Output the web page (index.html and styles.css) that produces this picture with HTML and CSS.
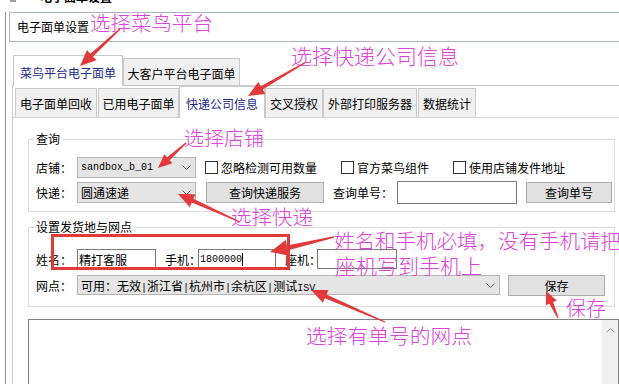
FILE: index.html
```html
<!DOCTYPE html>
<html lang="zh-CN">
<head>
<meta charset="utf-8">
<title>电子面单设置</title>
<link rel="stylesheet" href="styles.css">
</head>
<body>
<div class="titlebar">
  <span class="app-icon"></span>
  <span class="title-text">电子面单设置</span>
</div>
<div class="window">
  <div class="setting-box">电子面单设置</div>
  <div class="outer-tabs">
    <div class="tab sel otab1">菜鸟平台电子面单</div>
    <div class="tab otab2">大客户平台电子面单</div>
  </div>
  <div class="outer-panel">
    <div class="inner-tabs">
      <div class="tab itab it1">电子面单回收</div>
      <div class="tab itab it2">已用电子面单</div>
      <div class="tab sel it3">快递公司信息</div>
      <div class="tab itab it4">交叉授权</div>
      <div class="tab itab it5">外部打印服务器</div>
      <div class="tab itab it6">数据统计</div>
    </div>
    <div class="inner-panel">
      <fieldset class="group g-query">
        <legend>查询</legend>
        <div class="row row-shop">
          <span class="lbl">店铺：</span>
          <div class="combo c-small"><span class="mono">sandbox_b_01</span><svg class="chev" width="9" height="5" viewBox="0 0 9 5"><path d="M0.5 0.5 L4.5 4.5 L8.5 0.5" fill="none" stroke="#555" stroke-width="1"/></svg></div>
          <label class="chk chk1"><span class="box"></span>忽略检测可用数量</label>
          <label class="chk chk2"><span class="box"></span>官方菜鸟组件</label>
          <label class="chk chk3"><span class="box"></span>使用店铺发件地址</label>
        </div>
        <div class="row row-express">
          <span class="lbl">快递：</span>
          <div class="combo c-small"><span>圆通速递</span><svg class="chev" width="9" height="5" viewBox="0 0 9 5"><path d="M0.5 0.5 L4.5 4.5 L8.5 0.5" fill="none" stroke="#555" stroke-width="1"/></svg></div>
          <button class="btn btn-service">查询快递服务</button>
          <span class="lbl lbl-no">查询单号：</span>
          <div class="input in-no"></div>
          <button class="btn btn-query">查询单号</button>
        </div>
      </fieldset>
      <fieldset class="group g-sender">
        <legend>设置发货地与网点</legend>
        <div class="row row-contact">
          <span class="lbl">姓名：</span>
          <div class="input in-name">精打客服</div>
          <span class="lbl lbl-phone">手机：</span>
          <div class="input in-phone"><span class="mono">1800000</span><span class="caret"></span></div>
          <span class="lbl lbl-tel">座机：</span>
          <div class="input in-tel"></div>
        </div>
        <div class="row row-branch">
          <span class="lbl">网点：</span>
          <div class="combo c-wide"><span>可用：无效<span class="mono">|</span>浙江省<span class="mono">|</span>杭州市<span class="mono">|</span>余杭区<span class="mono">|</span>测试<span class="mono">ISV</span></span><svg class="chev" width="9" height="5" viewBox="0 0 9 5"><path d="M0.5 0.5 L4.5 4.5 L8.5 0.5" fill="none" stroke="#555" stroke-width="1"/></svg></div>
          <button class="btn btn-save">保存</button>
        </div>
      </fieldset>
      <div class="log">
        <div class="scroll"><svg width="9" height="5" viewBox="0 0 9 5"><path d="M0.5 4.5 L4.5 0.5 L8.5 4.5" fill="none" stroke="#a0a0a0" stroke-width="1"/></svg></div>
      </div>
    </div>
  </div>
</div>
<svg class="annot" width="619" height="384" viewBox="0 0 619 384">
  <g fill="#e23a3a">
    <polygon points="119.5,28.5 90.4,53.7 87,50 80,66 96.5,60.2 93.1,56.6 120.5,29.5"/>
    <polygon points="305.6,61.4 260.8,86.2 258.3,81.9 248,96 265.3,93.9 262.8,89.6 306.4,62.6"/>
    <polygon points="185.5,142.5 167.1,157.2 164.4,154.2 158,168 172.4,163.2 169.7,160.2 186.5,143.5"/>
    <polygon points="240.3,221.4 193.4,198.8 195.5,194.2 178,194 189.7,207 191.8,202.4 239.7,222.6"/>
    <polygon points="333.8,236.2 286.9,245.5 285.7,240.1 270,252 289.3,255.7 288.1,250.3 334.2,237.8"/>
    <polygon points="385.3,321.4 326.5,294.6 328.5,290 311,290 322.9,302.8 324.9,298.2 384.7,322.6"/>
    <polygon points="558.6,317.7 553.1,302.1 556.8,300.5 546,291 545.8,305.3 549.5,303.7 557.4,318.3"/>
  </g>
  <rect x="52.5" y="235.5" width="236" height="33" fill="none" stroke="#e23a3a" stroke-width="3"/>
  <g class="note">
    <text x="90" y="30.5" font-size="20.5">选择菜鸟平台</text>
    <text x="291" y="63.5" font-size="21">选择快递公司信息</text>
    <text x="184" y="145.5" font-size="20">选择店铺</text>
    <text x="231" y="224.5" font-size="20.5">选择快递</text>
    <text x="334" y="248.5" font-size="20.5">姓名和手机必填，没有手机请把</text>
    <text x="335" y="273.5" font-size="21">座机写到手机上</text>
    <text x="566" y="315.5" font-size="20">保存</text>
    <text x="306" y="343.5" font-size="20.75">选择有单号的网点</text>
  </g>
</svg>
</body>
</html>
```
FILE: styles.css
```css
* { box-sizing: border-box; }
html, body { margin: 0; padding: 0; }
body {
  width: 619px;
  height: 384px;
  overflow: hidden;
  position: relative;
  background: #ffffff;
  font-family: "Noto Sans CJK SC", "Noto Sans", sans-serif;
  font-size: 12px;
  color: #000;
}

/* title bar (mostly cut off) */
.titlebar {
  height: 5px;
  overflow: hidden;
  display: flex;
  align-items: flex-end;
  padding-left: 10px;
}
.app-icon {
  align-self: flex-start;
  width: 6px;
  height: 2px;
  background: #9aa3ad;
  margin-right: 24px;
}
.title-text {
  font-size: 12px;
  line-height: 16px;
  font-weight: 700;
}

.window {
  margin-left: 5px;
  border-left: 1px solid #8e8e8e;
  height: 379px;
}

.setting-box {
  margin: 7px 0 0 3px;
  width: 620px;
  height: 30px;
  border: 1px solid #a9b2c3;
  border-right: none;
  line-height: 28px;
  padding-left: 7px;
}

/* tabs */
.tab {
  border: 1px solid #c9c9c9;
  border-bottom: none;
  background: #f0f0f0;
  text-align: center;
  line-height: 16px;
  white-space: nowrap;
}
.tab.sel {
  background: #ffffff;
  color: #1c2b8e;
  position: relative;
  margin-bottom: -1px;
}
.outer-tabs {
  margin: 13px 0 0 7px;
  height: 30px;
  display: flex;
  align-items: flex-end;
}
.otab1 { width: 110px; height: 31px; padding-top: 9px; }
.otab2 { width: 117px; height: 27px; padding-top: 7px; }

.outer-panel {
  margin-left: 6px;
  border-left: 1px solid #c9c9c9;
  border-top: 1px solid #c9c9c9;
}
.inner-tabs {
  height: 31px;
  padding-left: 2px;
  display: flex;
  align-items: flex-end;
}
.itab { height: 29px; padding-top: 7px; }
.it1 { width: 82px; }
.it2 { width: 81px; margin-left: 1px; }
.it3 { width: 86px; height: 32px; padding-top: 9px; }
.it4 { width: 58px; }
.it5 { width: 94px; }
.it6 { width: 58px; margin-left: 1px; }

.inner-panel {
  border-top: 1px solid #d3d3d3;
  padding-left: 15px;
  height: 270px;
}

/* group boxes */
.group {
  margin: 0;
  width: 587px;
  min-width: 0;
  border: 1px solid #dcdcdc;
}
.group legend {
  padding: 0 2px;
  margin-left: -2px;
  line-height: 16px;
  height: 16px;
}
.g-query { margin-top: 13px; padding: 10px 0 7px 7px; }
.g-sender { margin-top: 7px; padding: 14px 0 10px 7px; }

.row { display: flex; align-items: center; }
.row-shop { height: 21px; }
.row-express { height: 24px; margin-top: 2px; }
.row-contact { height: 20px; }
.row-branch { height: 22px; margin-top: 5px; }

.lbl { width: 41px; flex: none; white-space: nowrap; }
.lbl-no { width: 64px; margin-left: 9px; }
.lbl-phone { width: 33px; margin-left: 9px; }
.lbl-tel { width: 32px; margin-left: 9px; }

.mono {
  font-family: "Liberation Mono", "DejaVu Sans Mono", monospace;
  font-size: 10px;
}

.combo {
  flex: none;
  display: flex;
  align-items: center;
  justify-content: space-between;
  height: 21px;
  background: #e5e5e5;
  border: 1px solid #b4b4b4;
  padding: 0 4px 0 3px;
  white-space: nowrap;
}
.c-small { width: 119px; }
.c-wide { width: 423px; height: 20px; }

.chk {
  flex: none;
  display: flex;
  align-items: center;
  white-space: nowrap;
}
.chk .box {
  width: 13px;
  height: 13px;
  border: 1px solid #333;
  background: #fff;
  margin-right: 3px;
}
.chk1 { width: 136px; margin-left: 9px; }
.chk2 { width: 112px; }

.btn {
  flex: none;
  height: 21px;
  padding: 0;
  font: inherit;
  color: #000;
  background: #e1e1e1;
  border: 1px solid #adadad;
  text-align: center;
}
.btn-service { width: 118px; margin-left: 10px; }
.btn-query { width: 86px; margin-left: 9px; }
.btn-save { width: 97px; margin-left: 8px; }

.input {
  flex: none;
  height: 20px;
  border: 1px solid #7a7a7a;
  background: #fff;
  display: flex;
  align-items: center;
  padding-left: 1px;
  white-space: nowrap;
}
.in-no { width: 120px; height: 23px; }
.in-name { width: 79px; }
.in-phone { width: 78px; }
.in-tel { width: 80px; }
.caret {
  width: 1px;
  height: 13px;
  background: #000;
}

.log {
  margin-top: 12px;
  width: 591px;
  height: 80px;
  border: 1px solid #828282;
  display: flex;
  justify-content: flex-end;
}
.scroll {
  width: 16px;
  background: #f0f0f0;
  display: flex;
  justify-content: center;
  align-items: flex-start;
  padding-top: 8px;
}

/* annotations overlay */
.annot {
  position: absolute;
  left: 0;
  top: 0;
  pointer-events: none;
}
.note text {
  font-family: "Noto Sans CJK SC", "Noto Sans", sans-serif;
  font-weight: 300;
  fill: #dd42db;
}
```
